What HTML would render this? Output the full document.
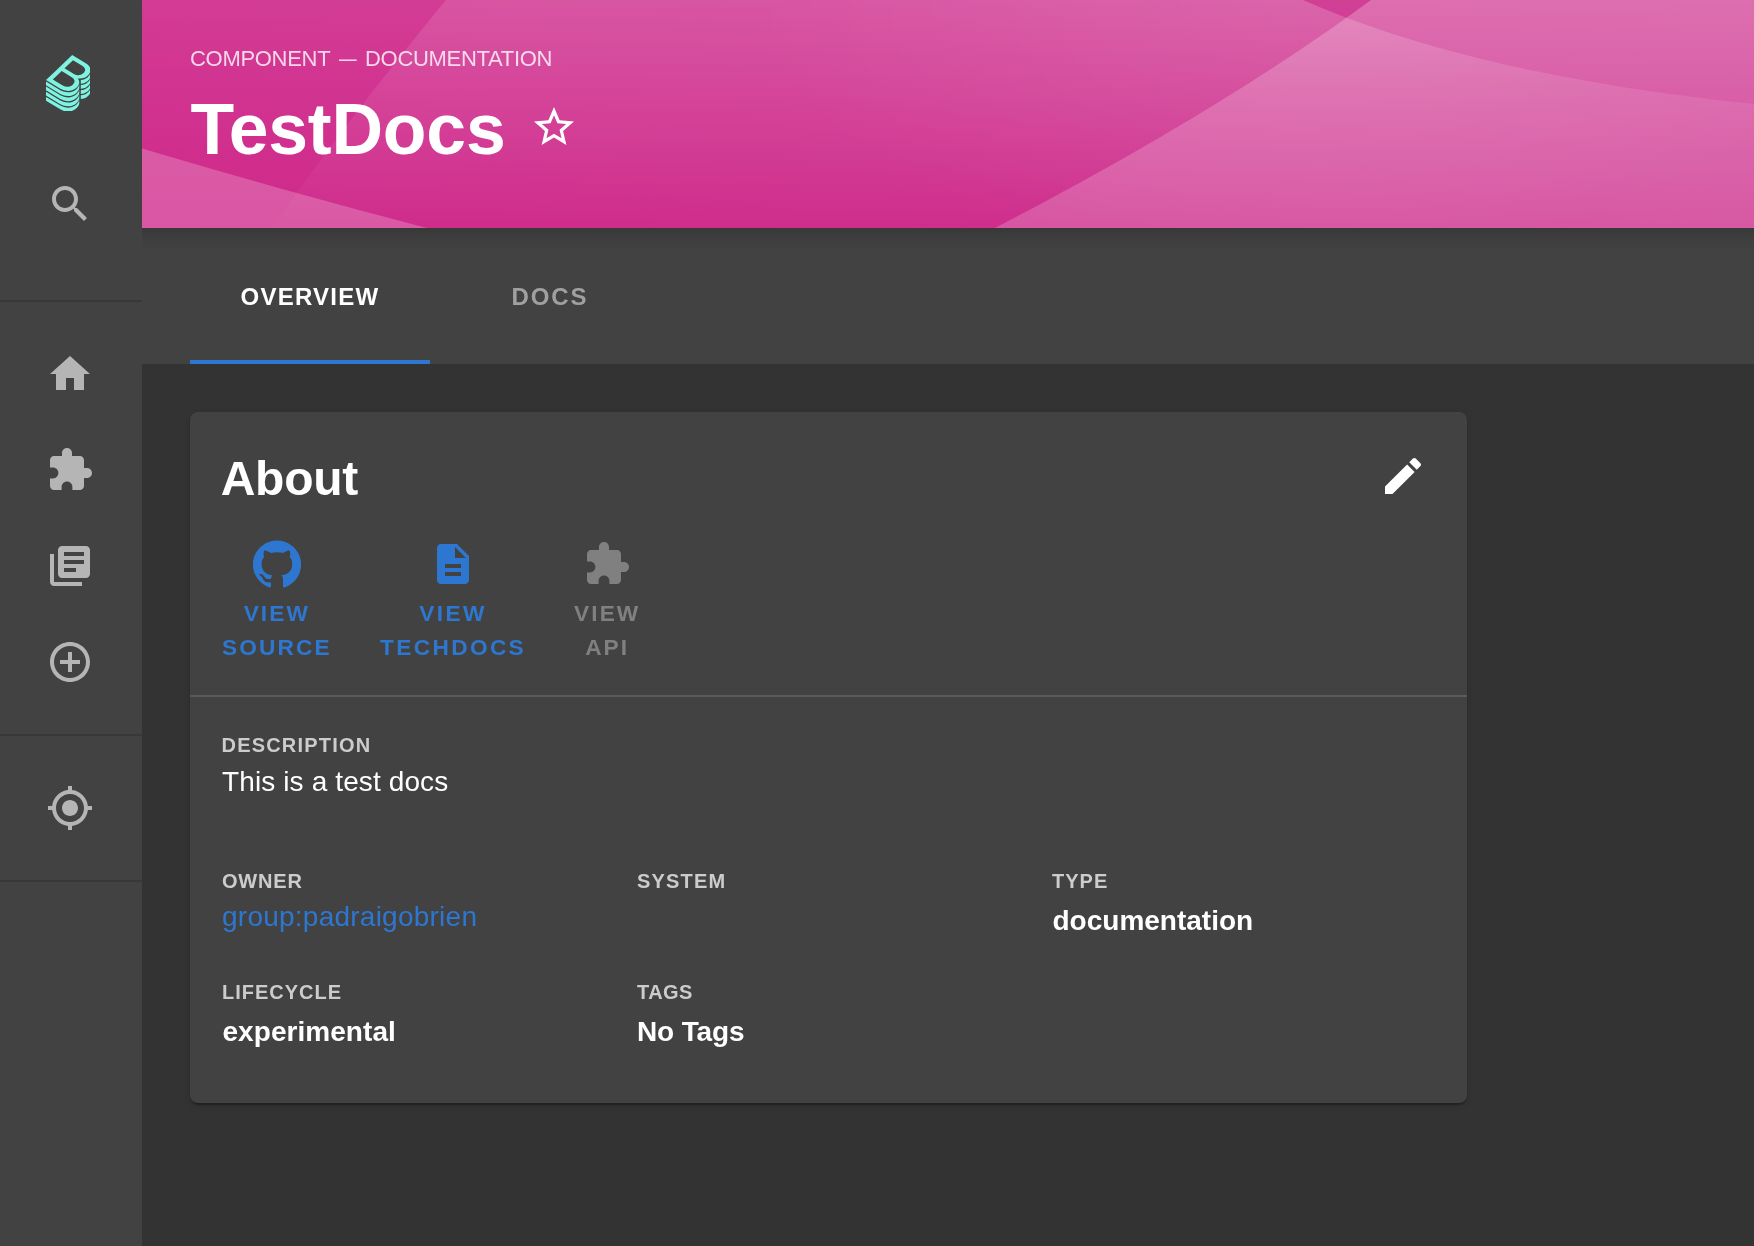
<!DOCTYPE html>
<html lang="en">
<head>
<meta charset="utf-8">
<title>TestDocs | Backstage</title>
<style>
*{box-sizing:border-box;margin:0;padding:0}
html,body{width:1754px;height:1246px;overflow:hidden;background:#333333}
body{font-family:"Liberation Sans",Helvetica,Arial,sans-serif;color:#fff;position:relative;-webkit-font-smoothing:antialiased}
.abs{position:absolute}
#sidebar,#header,#tabs,#card{will-change:transform}
/* sidebar */
#sidebar{position:absolute;left:0;top:0;width:142px;height:1246px;background:#424242}
#sidebar .ico{position:absolute;left:46px;width:48px;height:48px;fill:#b5b5b5}
#sidebar .hr{position:absolute;left:0;width:142px;height:2px;background:#383838}
/* header */
#header{position:absolute;left:142px;top:0;width:1612px;height:228px;overflow:hidden;
 background:linear-gradient(90deg,#CF288A,#CD2E8C);z-index:3}
#hshadow{position:absolute;left:142px;top:228px;width:1612px;height:20px;z-index:2;
 background:linear-gradient(180deg,rgba(0,0,0,.15),rgba(0,0,0,.07) 40%,rgba(0,0,0,0))}
#header svg.wave{position:absolute;left:0;top:0;width:1612px;height:228px}
#htype{position:absolute;left:48px;top:45.800px;font-size:22px;line-height:26px;color:#fff;opacity:.8;white-space:nowrap;text-transform:uppercase;letter-spacing:-.3px}
#htype span{position:absolute;top:0}
#htype .dash{display:inline-block;transform:scaleX(.8);transform-origin:0 50%}
#htitle{position:absolute;left:48.500px;top:88.500px;font-size:71.500px;line-height:80px;font-weight:700;color:#fff;white-space:nowrap;letter-spacing:-.2px}
#hstar{position:absolute;left:388px;top:103px;width:48px;height:48px;fill:#fff}
/* tabs */
#tabs{position:absolute;left:142px;top:228px;width:1612px;height:136px;background:#424242;z-index:1}
.tab{position:absolute;top:0;height:136px;width:240px;text-align:center;font-size:24px;font-weight:700;line-height:138px;letter-spacing:1.7px;text-transform:uppercase;color:#a0a0a0}
.tab.sel{color:#fff}
#ind{position:absolute;left:48px;top:132px;width:240px;height:4px;background:#2E77D0}
/* card */
#card{position:absolute;left:190px;top:412px;width:1277px;height:691px;background:#424242;border-radius:8px;
 box-shadow:0 4px 2px -2px rgba(0,0,0,.2),0 2px 2px 0 rgba(0,0,0,.14),0 2px 6px 0 rgba(0,0,0,.12)}
#about{position:absolute;left:30.700px;top:36.500px;font-size:48px;line-height:60px;font-weight:700;white-space:nowrap;letter-spacing:-.25px}
#edit{position:absolute;left:1189px;top:40px;width:48px;height:48px;fill:#fff}
.lnk{position:absolute;top:127.600px;text-align:center;font-size:22.700px;line-height:34px;font-weight:700;letter-spacing:2.100px;text-transform:uppercase;color:#2E77D0;white-space:nowrap}
.lnk svg{display:block;margin:0 auto 8.800px;width:48px;height:48px;fill:#2E77D0}
.lnk.dis{color:#808080}
.lnk.dis svg{fill:#808080}
#divider{position:absolute;left:0;top:283px;width:1277px;height:2px;background:#5a5a5a}
.lab{position:absolute;font-size:20px;line-height:24px;font-weight:700;letter-spacing:1px;text-transform:uppercase;color:#cccccc;white-space:nowrap}
.val{position:absolute;font-size:28px;line-height:48px;font-weight:700;color:#fff;white-space:nowrap}
.val.n{font-weight:400}
.val a{color:#2E77D0;text-decoration:none;font-weight:400}
</style>
</head>
<body>
<div id="sidebar">
  <svg id="logo" viewBox="0 0 337.46 428.5" style="position:absolute;left:45.800px;top:54.800px;width:44.500px;height:56.500px"><path fill="#7df3e1" d="M303,166.05a80.69,80.69,0,0,0,13.45-10.37c.79-.77,1.55-1.53,2.3-2.3a83.12,83.12,0,0,0,7.93-9.38A63.69,63.69,0,0,0,333,133.23a48.58,48.58,0,0,0,4.35-16.4c1.49-19.39-10-38.67-35.62-54.22L198.56,0,78.3,115.23,0,190.25l108.6,65.91a111.59,111.59,0,0,0,57.76,16.41c24.92,0,48.8-8.8,66.42-25.69,19.16-18.36,25.52-42.12,13.7-61.87a49.22,49.22,0,0,0-6.8-8.87A89.17,89.17,0,0,0,259,178.29h.15a85.08,85.08,0,0,0,31-5.79A80.88,80.88,0,0,0,303,166.05ZM202.45,225.86c-19.32,18.51-50.4,21.23-75.7,5.9L51.61,186.15l67.45-64.64,76.41,46.38C223,184.58,221.49,207.61,202.45,225.86Zm8.93-82.22-70.65-42.89L205.14,39,274.51,81.1c25.94,15.72,29.31,37,10.55,55A60.69,60.69,0,0,1,211.38,143.64ZM0,200.75l108.6,65.91a111.59,111.59,0,0,0,57.76,16.41c24.92,0,48.8-8.8,66.42-25.69c12.6-12.07,19.66-26.48,19.66-40.54v28.5c0,14.06-7.06,28.47-19.66,40.54c-17.62,16.89-41.5,25.69-66.42,25.69a111.59,111.59,0,0,1-57.76-16.41l-108.6-65.91ZM264,188.70a85.08,85.08,0,0,0,28.15-5.7a80.88,80.88,0,0,0,12.85-6.45a80.69,80.69,0,0,0,13.45-10.37c.79-.77,1.55-1.53,2.3-2.3a83.12,83.12,0,0,0,7.93-9.38a63.69,63.69,0,0,0,6.32-10.77a48.58,48.58,0,0,0,4.35-16.4v28.5a48.58,48.58,0,0,1-4.35,16.4a63.69,63.69,0,0,1-6.32,10.77a83.12,83.12,0,0,1-7.93,9.38c-.75.77-1.51,1.53-2.3,2.3a80.69,80.69,0,0,1-13.45,10.37a80.88,80.88,0,0,1-12.85,6.45a85.08,85.08,0,0,1-28.15,5.7ZM0,239.75l108.6,65.91a111.59,111.59,0,0,0,57.76,16.41c24.92,0,48.8-8.8,66.42-25.69c12.6-12.07,19.66-26.48,19.66-40.54v28.5c0,14.06-7.06,28.47-19.66,40.54c-17.62,16.89-41.5,25.69-66.42,25.69a111.59,111.59,0,0,1-57.76-16.41l-108.6-65.91ZM264,227.70a85.08,85.08,0,0,0,28.15-5.7a80.88,80.88,0,0,0,12.85-6.45a80.69,80.69,0,0,0,13.45-10.37c.79-.77,1.55-1.53,2.3-2.3a83.12,83.12,0,0,0,7.93-9.38a63.69,63.69,0,0,0,6.32-10.77a48.58,48.58,0,0,0,4.35-16.4v28.5a48.58,48.58,0,0,1-4.35,16.4a63.69,63.69,0,0,1-6.32,10.77a83.12,83.12,0,0,1-7.93,9.38c-.75.77-1.51,1.53-2.3,2.3a80.69,80.69,0,0,1-13.45,10.37a80.88,80.88,0,0,1-12.85,6.45a85.08,85.08,0,0,1-28.15,5.7ZM0,278.75l108.6,65.91a111.59,111.59,0,0,0,57.76,16.41c24.92,0,48.8-8.8,66.42-25.69c12.6-12.07,19.66-26.48,19.66-40.54v28.5c0,14.06-7.06,28.47-19.66,40.54c-17.62,16.89-41.5,25.69-66.42,25.69a111.59,111.59,0,0,1-57.76-16.41l-108.6-65.91ZM264,266.70a85.08,85.08,0,0,0,28.15-5.7a80.88,80.88,0,0,0,12.85-6.45a80.69,80.69,0,0,0,13.45-10.37c.79-.77,1.55-1.53,2.3-2.3a83.12,83.12,0,0,0,7.93-9.38a63.69,63.69,0,0,0,6.32-10.77a48.58,48.58,0,0,0,4.35-16.4v28.5a48.58,48.58,0,0,1-4.35,16.4a63.69,63.69,0,0,1-6.32,10.77a83.12,83.12,0,0,1-7.93,9.38c-.75.77-1.51,1.53-2.3,2.3a80.69,80.69,0,0,1-13.45,10.37a80.88,80.88,0,0,1-12.85,6.45a85.08,85.08,0,0,1-28.15,5.7ZM0,317.75l108.6,65.91a111.59,111.59,0,0,0,57.76,16.41c24.92,0,48.8-8.8,66.42-25.69c12.6-12.07,19.66-26.48,19.66-40.54v28.5c0,14.06-7.06,28.47-19.66,40.54c-17.62,16.89-41.5,25.69-66.42,25.69a111.59,111.59,0,0,1-57.76-16.41l-108.6-65.91ZM264,305.70a85.08,85.08,0,0,0,28.15-5.7a80.88,80.88,0,0,0,12.85-6.45a80.69,80.69,0,0,0,13.45-10.37c.79-.77,1.55-1.53,2.3-2.3a83.12,83.12,0,0,0,7.93-9.38a63.69,63.69,0,0,0,6.32-10.77a48.58,48.58,0,0,0,4.35-16.4v28.5a48.58,48.58,0,0,1-4.35,16.4a63.69,63.69,0,0,1-6.32,10.77a83.12,83.12,0,0,1-7.93,9.38c-.75.77-1.51,1.53-2.3,2.3a80.69,80.69,0,0,1-13.45,10.37a80.88,80.88,0,0,1-12.85,6.45a85.08,85.08,0,0,1-28.15,5.7Z"/></svg>
  <svg class="ico" style="top:180px" viewBox="0 0 24 24"><path d="M15.5 14h-.79l-.28-.27C15.41 12.59 16 11.11 16 9.5 16 5.91 13.09 3 9.5 3S3 5.91 3 9.5 5.91 16 9.5 16c1.61 0 3.09-.59 4.23-1.570l.27.28v.79l5 4.99L20.490 19l-4.990-5zm-6 0C7.010 14 5 11.990 5 9.500S7.010 5 9.500 5 14 7.010 14 9.500 11.990 14 9.500 14z"/></svg>
  <div class="hr" style="top:300px"></div>
  <svg class="ico" style="top:350px" viewBox="0 0 24 24"><path d="M10 20v-6h4v6h5v-8h3L12 3 2 12h3v8z"/></svg>
  <svg class="ico" style="top:446px" viewBox="0 0 24 24"><path d="M20.5 11H19V7c0-1.100-.9-2-2-2h-4V3.500C13 2.120 11.880 1 10.500 1S8 2.120 8 3.500V5H4c-1.100 0-1.990.9-1.990 2v3.800H3.500c1.490 0 2.700 1.210 2.700 2.700s-1.210 2.700-2.700 2.700H2V20c0 1.100.9 2 2 2h3.800v-1.500c0-1.490 1.210-2.700 2.700-2.700 1.490 0 2.700 1.210 2.700 2.700V22H17c1.100 0 2-.9 2-2v-4h1.500c1.380 0 2.500-1.120 2.500-2.500S21.880 11 20.500 11z"/></svg>
  <svg class="ico" style="top:542px" viewBox="0 0 24 24"><path d="M4 6H2v14c0 1.100.9 2 2 2h14v-2H4V6zm16-4H8c-1.100 0-2 .9-2 2v12c0 1.100.9 2 2 2h12c1.100 0 2-.9 2-2V4c0-1.100-.9-2-2-2zm-1 9H9V9h10v2zm-4 4H9v-2h6v2zm4-8H9V5h10v2z"/></svg>
  <svg class="ico" style="top:638px" viewBox="0 0 24 24"><path d="M13 7h-2v4H7v2h4v4h2v-4h4v-2h-4V7zm-1-5C6.480 2 2 6.480 2 12s4.480 10 10 10 10-4.480 10-10S17.520 2 12 2zm0 18c-4.410 0-8-3.590-8-8s3.590-8 8-8 8 3.590 8 8-3.590 8-8 8z"/></svg>
  <div class="hr" style="top:734px"></div>
  <svg class="ico" style="top:784px" viewBox="0 0 24 24"><path d="M12 8c-2.210 0-4 1.790-4 4s1.790 4 4 4 4-1.790 4-4-1.790-4-4-4zm8.940 3c-.46-4.170-3.770-7.480-7.940-7.940V1h-2v2.060C6.830 3.520 3.520 6.830 3.060 11H1v2h2.060c.46 4.170 3.770 7.480 7.940 7.940V23h2v-2.060c4.170-.46 7.480-3.770 7.940-7.940H23v-2h-2.060zM12 19c-3.870 0-7-3.130-7-7s3.130-7 7-7 7 3.130 7 7-3.130 7-7 7z"/></svg>
  <div class="hr" style="top:880px"></div>
</div>

<div id="hshadow"></div>
<div id="header">
  <svg class="wave" viewBox="0 0 1612 228" preserveAspectRatio="none">
    <defs>
      <linearGradient id="gTop" x1="0" y1="0" x2="0" y2="1"><stop offset="0" stop-color="#fff" stop-opacity=".09"/><stop offset="1" stop-color="#fff" stop-opacity="0"/></linearGradient>
      <linearGradient id="gB" x1="0" y1="0" x2="0" y2="1"><stop offset="0" stop-color="#fff" stop-opacity=".125"/><stop offset="1" stop-color="#fff" stop-opacity=".014"/></linearGradient>
      <linearGradient id="gV" x1="0" y1="0" x2="0" y2="1"><stop offset="0" stop-color="#fff" stop-opacity=".245"/><stop offset=".4" stop-color="#fff" stop-opacity=".198"/><stop offset="1" stop-color="#fff" stop-opacity=".19"/></linearGradient>
      <radialGradient id="gGlow" gradientUnits="userSpaceOnUse" cx="1158" cy="0" r="550" gradientTransform="matrix(1 0 0 .47 0 0)"><stop offset="0" stop-color="#fff" stop-opacity=".08"/><stop offset="1" stop-color="#fff" stop-opacity="0"/></radialGradient>
    </defs>
    <rect x="0" y="0" width="1612" height="228" fill="url(#gTop)"/>
    <path d="M304 0 Q205 120 130 228 L1612 228 L1612 104 C1450 87 1290 57 1161 0 Z" fill="url(#gB)"/>
    <path d="M304 0 Q205 120 130 228 L1612 228 L1612 104 C1450 87 1290 57 1161 0 Z" fill="url(#gGlow)"/>
    <path d="M0 148.500 Q142.500 191 285 228 L0 228 Z" fill="#fff" fill-opacity=".215"/>
    <path d="M853 228 Q1080 110 1229 0 L1612 0 L1612 228 Z" fill="url(#gV)"/>
  </svg>
  <div id="htype"><span style="left:0">Component</span><span class="dash" style="left:149.200px">—</span><span style="left:175px">Documentation</span></div>
  <div id="htitle">TestDocs</div>
  <svg id="hstar" viewBox="0 0 24 24"><path d="M22 9.240l-7.190-.620L12 2 9.190 8.630 2 9.240l5.460 4.730L5.820 21 12 17.270 18.180 21l-1.630-7.030L22 9.240zM12 15.400l-3.760 2.270 1-4.280-3.320-2.880 4.380-.380L12 6.100l1.710 4.040 4.380.380-3.320 2.880 1 4.280L12 15.400z"/></svg>
</div>

<div id="tabs">
  <div class="tab sel" style="left:48px;letter-spacing:1.250px">Overview</div>
  <div class="tab" style="left:288px;letter-spacing:1.900px">Docs</div>
  <div id="ind"></div>
</div>

<div id="card">
  <div id="about">About</div>
  <svg id="edit" viewBox="0 0 24 24"><path d="M3 17.250V21h3.750L17.810 9.940l-3.750-3.750L3 17.250zM20.710 7.040c.39-.39.39-1.020 0-1.410l-2.340-2.340c-.39-.39-1.020-.39-1.410 0l-1.830 1.830 3.750 3.750 1.830-1.830z"/></svg>
  <div class="lnk" style="left:32px"><svg viewBox="0 0 24 24"><path d="M12 .3a12 12 0 0 0-3.800 23.400c.6.100.8-.3.8-.6v-2c-3.300.7-4-1.600-4-1.600-.6-1.400-1.400-1.800-1.400-1.800-1-.7.100-.7.100-.7 1.200 0 1.900 1.200 1.900 1.200 1 1.800 2.800 1.300 3.500 1 0-.8.4-1.300.7-1.600-2.700-.3-5.500-1.300-5.500-6 0-1.200.5-2.300 1.300-3.100-.2-.4-.6-1.600 0-3.200 0 0 1-.3 3.400 1.200a11.500 11.500 0 0 1 6 0c2.300-1.500 3.300-1.200 3.300-1.200.6 1.600.2 2.800 0 3.200.9.800 1.300 1.900 1.300 3.200 0 4.600-2.800 5.600-5.500 5.900.5.400.9 1 .9 2.200v3.300c0 .3.100.7.8.6A12 12 0 0 0 12 .3"/></svg>View<br>Source</div>
  <div class="lnk" style="left:190px;letter-spacing:2.350px"><svg viewBox="0 0 24 24"><path d="M14 2H6c-1.100 0-1.990.9-1.990 2L4 20c0 1.100.89 2 1.990 2H18c1.100 0 2-.9 2-2V8l-6-6zm2 16H8v-2h8v2zm0-4H8v-2h8v2zm-3-5V3.500L18.500 9H13z"/></svg>View<br>TechDocs</div>
  <div class="lnk dis" style="left:384px"><svg viewBox="0 0 24 24"><path d="M20.5 11H19V7c0-1.100-.9-2-2-2h-4V3.500C13 2.120 11.880 1 10.500 1S8 2.120 8 3.500V5H4c-1.100 0-1.990.9-1.990 2v3.800H3.500c1.490 0 2.700 1.210 2.700 2.700s-1.210 2.700-2.700 2.700H2V20c0 1.100.9 2 2 2h3.800v-1.500c0-1.490 1.210-2.700 2.700-2.700 1.490 0 2.700 1.210 2.700 2.700V22H17c1.100 0 2-.9 2-2v-4h1.500c1.380 0 2.500-1.120 2.500-2.500S21.880 11 20.500 11z"/></svg>View<br>API</div>
  <div id="divider"></div>

  <div class="lab" style="left:31.500px;top:321px;letter-spacing:1.200px">Description</div>
  <div class="val n" style="left:32px;top:346.300px;letter-spacing:.12px">This is a test docs</div>

  <div class="lab" style="left:32px;top:457px;letter-spacing:.8px">Owner</div>
  <div class="val" style="left:32px;top:481px;letter-spacing:.24px"><a>group:padraigobrien</a></div>
  <div class="lab" style="left:447px;top:457px;letter-spacing:1.200px">System</div>
  <div class="lab" style="left:862px;top:457px">Type</div>
  <div class="val" style="left:862.500px;top:485px">documentation</div>

  <div class="lab" style="left:32px;top:568px">Lifecycle</div>
  <div class="val" style="left:32.500px;top:596.300px;letter-spacing:.05px">experimental</div>
  <div class="lab" style="left:447px;top:568px;letter-spacing:.4px">Tags</div>
  <div class="val" style="left:447px;top:596px;letter-spacing:-.15px">No Tags</div>
</div>
</body>
</html>
